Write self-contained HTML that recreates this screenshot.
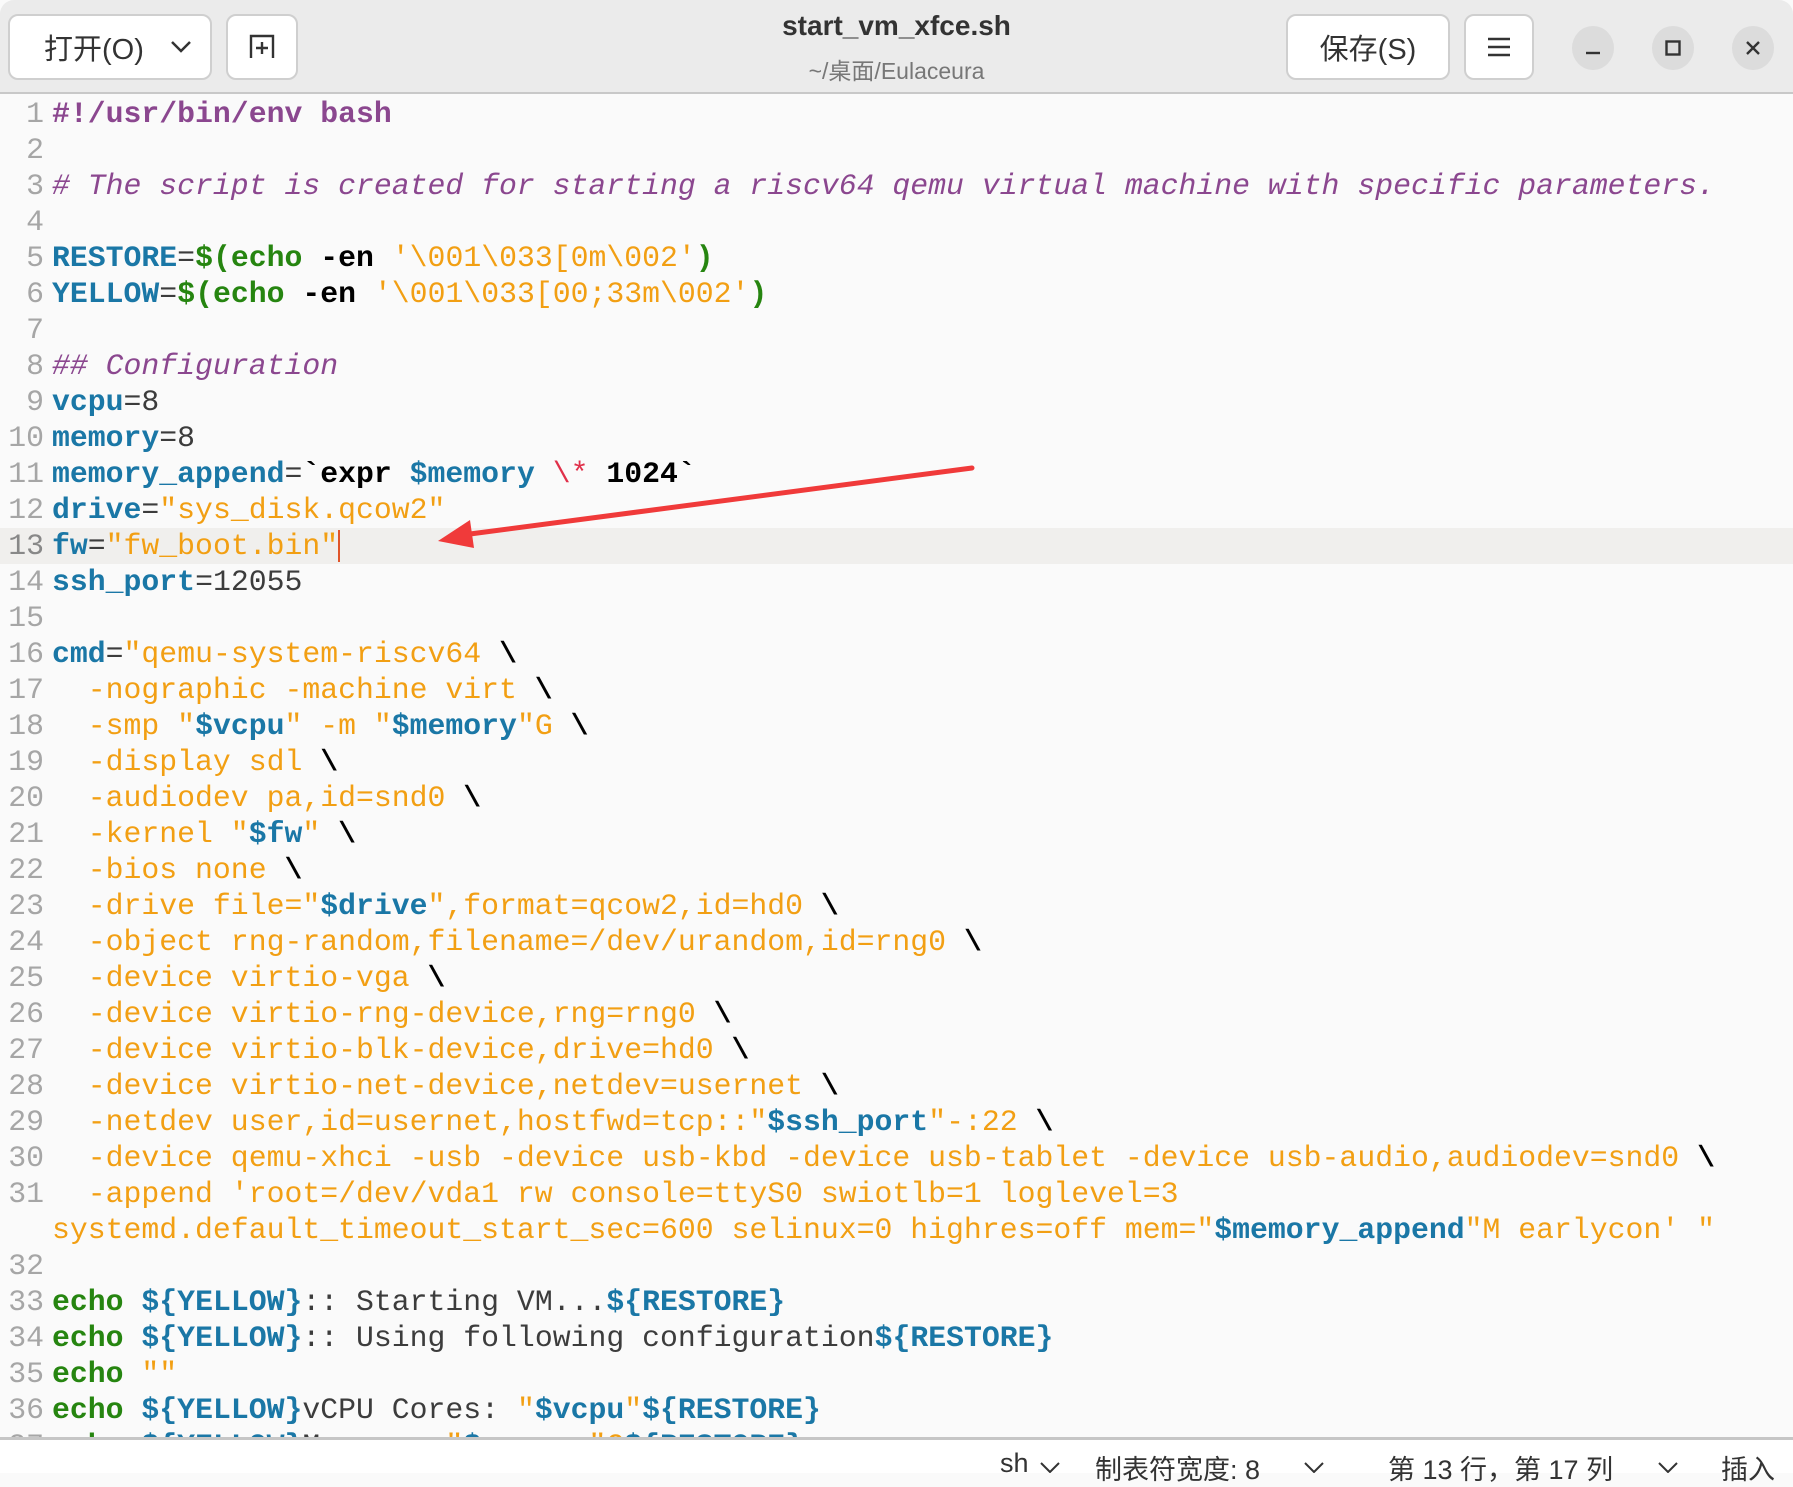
<!DOCTYPE html>
<html><head><meta charset="utf-8"><style>
*{margin:0;padding:0;box-sizing:border-box}
body{width:1793px;height:1473px;overflow:hidden;background:#fafafa;font-family:"Liberation Sans","Noto Sans CJK SC",sans-serif;position:relative}
.hdr{position:absolute;left:0;top:0;width:1793px;height:94px;background:#ebebeb;border-bottom:2px solid #c8c8c8;border-radius:14px 14px 0 0}
.btn{position:absolute;top:14px;height:66px;background:#fff;border:2px solid #cfcfcf;border-radius:10px;color:#333;font-size:29px;display:flex;align-items:center;justify-content:center}
.circ{position:absolute;top:26px;width:42px;height:44px;border-radius:50%;background:#dcdcdc}
.title{position:absolute;left:0;width:1793px;text-align:center;top:10px;font-weight:bold;font-size:28px;color:#333}
.sub{position:absolute;left:0;width:1793px;text-align:center;top:52px;font-size:23px;color:#777}
.code{position:absolute;left:0;top:96px;width:1793px;font-family:"Liberation Mono",monospace;font-size:29.8px;color:#3c3c3c}
.r{height:36px;line-height:36px;white-space:pre;position:relative}
.n{display:inline-block;width:44px;text-align:right;color:#a6a6a6;margin-right:8px}
.cur{background:#f0efed}
.p{color:#8b478f}.pb{color:#8b478f;font-weight:bold}.i{font-style:italic}
.b{color:#1a77a6;font-weight:bold}.g{color:#268510;font-weight:bold}.o{color:#f29f13}.k{color:#000;font-weight:bold}.rd{color:#e0304a}
.status{position:absolute;left:0;top:1437px;width:1793px;height:36px;background:#fff;border-top:3px solid #c6c6c6;font-size:27px;color:#333;white-space:pre}
.status span{position:absolute;top:8px;white-space:nowrap}
.status svg{position:absolute;top:22px}
</style></head><body>
<div class="hdr"></div>
<div class="btn" style="left:8px;width:204px;padding-left:34px;justify-content:flex-start">打开(O)<svg style="position:absolute;left:160px" width="22" height="14" viewBox="0 0 22 14"><path d="M2 2 L11 11 L20 2" stroke="#333" stroke-width="2.5" fill="none"/></svg></div>
<div class="btn" style="left:226px;width:72px"><svg width="30" height="30" viewBox="0 0 30 30"><path d="M4 26 V4 H26 V26 M15 10 V22 M9 16 H21" stroke="#333" stroke-width="2.4" fill="none"/></svg></div>
<div class="title">start_vm_xfce.sh</div>
<div class="sub">~/桌面/Eulaceura</div>
<div class="btn" style="left:1286px;width:164px">保存(S)</div>
<div class="btn" style="left:1464px;width:70px"><svg width="24" height="22" viewBox="0 0 24 22"><path d="M1 3H23M1 11H23M1 19H23" stroke="#333" stroke-width="2.4"/></svg></div>
<div class="circ" style="left:1572px"><svg width="42" height="44"><path d="M14 27H28" stroke="#333" stroke-width="2.4"/></svg></div>
<div class="circ" style="left:1652px"><svg width="42" height="44"><rect x="14.5" y="15.5" width="13" height="13" stroke="#333" stroke-width="2.4" fill="none"/></svg></div>
<div class="circ" style="left:1732px"><svg width="42" height="44"><path d="M15 16L27 28M27 16L15 28" stroke="#333" stroke-width="2.4"/></svg></div>

<div class="code">
<div class="r"><span class="n">1</span><span class="pb">#!/usr/bin/env bash</span></div>
<div class="r"><span class="n">2</span></div>
<div class="r"><span class="n">3</span><span class="p i"># The script is created for starting a riscv64 qemu virtual machine with specific parameters.</span></div>
<div class="r"><span class="n">4</span></div>
<div class="r"><span class="n">5</span><span class="b">RESTORE</span>=<span class="g">$(echo</span> <span class="k">-en</span> <span class="o">'\001\033[0m\002'</span><span class="g">)</span></div>
<div class="r"><span class="n">6</span><span class="b">YELLOW</span>=<span class="g">$(echo</span> <span class="k">-en</span> <span class="o">'\001\033[00;33m\002'</span><span class="g">)</span></div>
<div class="r"><span class="n">7</span></div>
<div class="r"><span class="n">8</span><span class="p i">## Configuration</span></div>
<div class="r"><span class="n">9</span><span class="b">vcpu</span>=8</div>
<div class="r"><span class="n">10</span><span class="b">memory</span>=8</div>
<div class="r"><span class="n">11</span><span class="b">memory_append</span>=<span class="k">`expr</span> <span class="b">$memory</span> <span class="rd">\*</span> <span class="k">1024`</span></div>
<div class="r"><span class="n">12</span><span class="b">drive</span>=<span class="o">"sys_disk.qcow2"</span></div>
<div class="r cur"><span class="n" style="color:#888">13</span><span class="b">fw</span>=<span class="o">"fw_boot.bin"</span><span style="display:inline-block;width:2px;height:32px;background:#e0552a;vertical-align:middle"></span></div>
<div class="r"><span class="n">14</span><span class="b">ssh_port</span>=12055</div>
<div class="r"><span class="n">15</span></div>
<div class="r"><span class="n">16</span><span class="b">cmd</span>=<span class="o">"qemu-system-riscv64 </span><span class="k">\</span></div>
<div class="r"><span class="n">17</span><span class="o">  -nographic -machine virt </span><span class="k">\</span></div>
<div class="r"><span class="n">18</span><span class="o">  -smp "</span><span class="b">$vcpu</span><span class="o">" -m "</span><span class="b">$memory</span><span class="o">"G </span><span class="k">\</span></div>
<div class="r"><span class="n">19</span><span class="o">  -display sdl </span><span class="k">\</span></div>
<div class="r"><span class="n">20</span><span class="o">  -audiodev pa,id=snd0 </span><span class="k">\</span></div>
<div class="r"><span class="n">21</span><span class="o">  -kernel "</span><span class="b">$fw</span><span class="o">" </span><span class="k">\</span></div>
<div class="r"><span class="n">22</span><span class="o">  -bios none </span><span class="k">\</span></div>
<div class="r"><span class="n">23</span><span class="o">  -drive file="</span><span class="b">$drive</span><span class="o">",format=qcow2,id=hd0 </span><span class="k">\</span></div>
<div class="r"><span class="n">24</span><span class="o">  -object rng-random,filename=/dev/urandom,id=rng0 </span><span class="k">\</span></div>
<div class="r"><span class="n">25</span><span class="o">  -device virtio-vga </span><span class="k">\</span></div>
<div class="r"><span class="n">26</span><span class="o">  -device virtio-rng-device,rng=rng0 </span><span class="k">\</span></div>
<div class="r"><span class="n">27</span><span class="o">  -device virtio-blk-device,drive=hd0 </span><span class="k">\</span></div>
<div class="r"><span class="n">28</span><span class="o">  -device virtio-net-device,netdev=usernet </span><span class="k">\</span></div>
<div class="r"><span class="n">29</span><span class="o">  -netdev user,id=usernet,hostfwd=tcp::"</span><span class="b">$ssh_port</span><span class="o">"-:22 </span><span class="k">\</span></div>
<div class="r"><span class="n">30</span><span class="o">  -device qemu-xhci -usb -device usb-kbd -device usb-tablet -device usb-audio,audiodev=snd0 </span><span class="k">\</span></div>
<div class="r"><span class="n">31</span><span class="o">  -append 'root=/dev/vda1 rw console=ttyS0 swiotlb=1 loglevel=3</span></div>
<div class="r"><span class="n"></span><span class="o">systemd.default_timeout_start_sec=600 selinux=0 highres=off mem="</span><span class="b">$memory_append</span><span class="o">"M earlycon' "</span></div>
<div class="r"><span class="n">32</span></div>
<div class="r"><span class="n">33</span><span class="g">echo</span> <span class="b">${YELLOW}</span>:: Starting VM...<span class="b">${RESTORE}</span></div>
<div class="r"><span class="n">34</span><span class="g">echo</span> <span class="b">${YELLOW}</span>:: Using following configuration<span class="b">${RESTORE}</span></div>
<div class="r"><span class="n">35</span><span class="g">echo</span> <span class="o">""</span></div>
<div class="r"><span class="n">36</span><span class="g">echo</span> <span class="b">${YELLOW}</span>vCPU Cores: <span class="o">"</span><span class="b">$vcpu</span><span class="o">"</span><span class="b">${RESTORE}</span></div>
<div class="r"><span class="n">37</span><span class="g">echo</span> <span class="b">${YELLOW}</span>Memory: <span class="o">"</span><span class="b">$memory</span><span class="o">"G</span><span class="b">${RESTORE}</span></div>
</div>

<svg style="position:absolute;left:0;top:0" width="1793" height="1473">
<path d="M972 468 L470 534" stroke="#f03a3a" stroke-width="5" fill="none" stroke-linecap="round"/>
<path d="M438 541 L470 520 L474 548 Z" fill="#f03a3a"/>
</svg>

<div class="status">
<span style="left:1000px">sh</span>
<svg style="left:1040px" width="20" height="11"><path d="M1 1L10 10L19 1" stroke="#333" stroke-width="2" fill="none"/></svg>
<span style="left:1095px">制表符宽度: 8</span>
<svg style="left:1304px" width="20" height="11"><path d="M1 1L10 10L19 1" stroke="#333" stroke-width="2" fill="none"/></svg>
<span style="left:1388px">第 13 行，第 17 列</span>
<svg style="left:1658px" width="20" height="11"><path d="M1 1L10 10L19 1" stroke="#333" stroke-width="2" fill="none"/></svg>
<span style="left:1721px">插入</span>
</div>
</body></html>
